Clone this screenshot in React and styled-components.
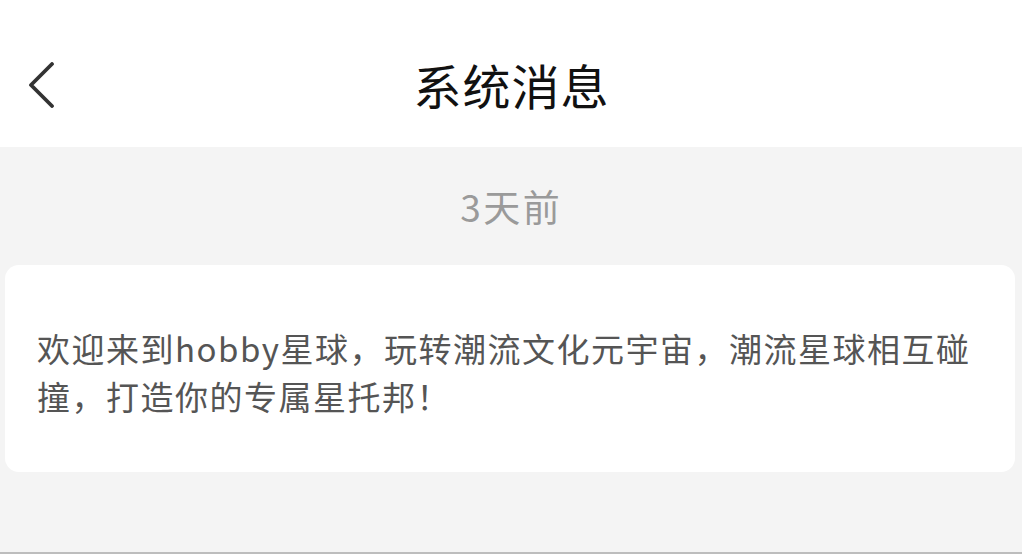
import React from 'react'
import styled, { createGlobalStyle } from 'styled-components'

const GlobalStyle = createGlobalStyle`
  html, body {
    margin: 0;
    padding: 0;
    background: #f4f4f4;
  }
  body {
    font-family: "Noto Sans CJK SC", "Noto Sans", sans-serif;
  }
`

const App = () => {
  return (
    <Page>
      <GlobalStyle />
      <Header>
        <BackButton aria-label="back">
          <svg width="28" height="46" viewBox="0 0 28 46" fill="none">
            <path d="M25 2 L4 23 L25 44" stroke="#333" strokeWidth="3.8" strokeLinecap="round" strokeLinejoin="round" />
          </svg>
        </BackButton>
        <Title>系统消息</Title>
      </Header>
      <Body>
        <TimeLabel>3天前</TimeLabel>
        <MessageCard>
          欢迎来到hobby星球，玩转潮流文化元宇宙，潮流星球相互碰撞，打造你的专属星托邦！
        </MessageCard>
      </Body>
      <BottomLine />
    </Page>
  )
}

export default App

const Page = styled.div`
  min-height: 554px;
  display: flex;
  flex-direction: column;
  background: #f4f4f4;
`

const Header = styled.header`
  height: 147px;
  background: #fff;
  display: flex;
  align-items: center;
  justify-content: center;
  position: relative;
`

const BackButton = styled.button`
  position: absolute;
  left: 27px;
  top: 62px;
  padding: 0;
  border: none;
  background: transparent;
  display: flex;
`

const Title = styled.h1`
  margin: 0;
  padding-left: 1px;
  font-size: 48px;
  font-weight: 400;
  letter-spacing: 1px;
  color: #111;
  line-height: 1;
  transform: translateY(10px);
`

const Body = styled.main`
  flex: 1;
  display: flex;
  flex-direction: column;
  align-items: center;
  padding: 0 7px 0 5px;
`

const TimeLabel = styled.div`
  height: 118px;
  display: flex;
  align-items: center;
  padding-left: 2.5px;
  font-size: 37px;
  letter-spacing: 2.5px;
  color: #9a9a9a;
`

const MessageCard = styled.section`
  align-self: stretch;
  background: #fff;
  border-radius: 14px;
  padding: 59px 25px 52px 32px;
  font-size: 33px;
  letter-spacing: 1.5px;
  line-height: 48px;
  color: #555;
`

const BottomLine = styled.div`
  height: 2px;
  background: #bdbdbd;
`
